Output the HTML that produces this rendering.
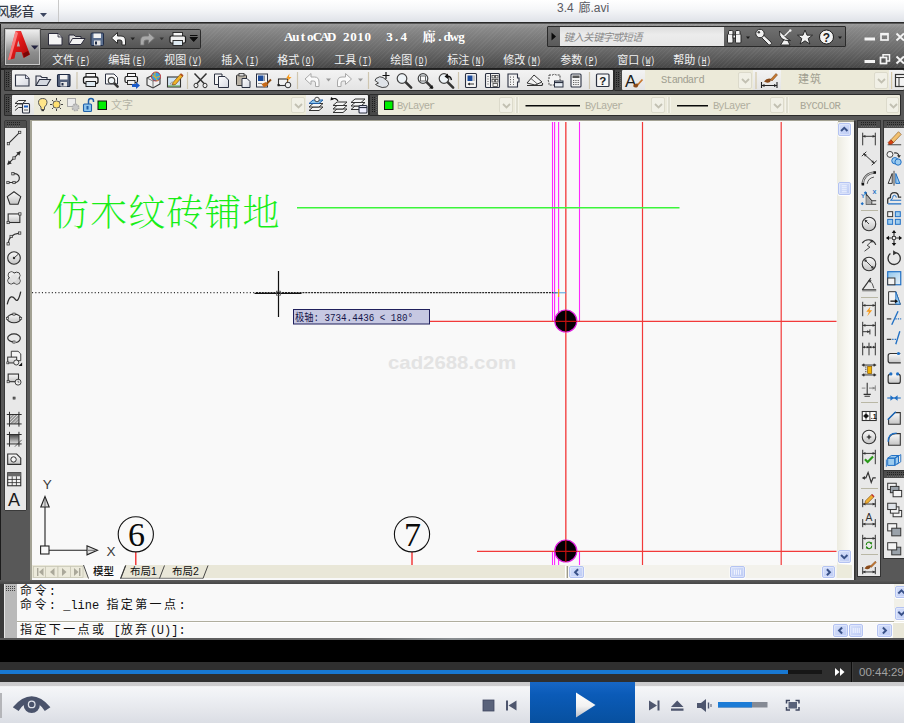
<!DOCTYPE html>
<html lang="zh-CN">
<head>
<meta charset="utf-8">
<title>3.4 廊.avi</title>
<style>
*{margin:0;padding:0;box-sizing:border-box}
html,body{width:904px;height:723px;overflow:hidden;background:#585858;font-family:"Liberation Sans","Noto Sans CJK SC",sans-serif}
.abs{position:absolute}
#root{position:relative;width:904px;height:723px;overflow:hidden;background:#585858}
/* player title */
#ptitle{left:0;top:0;width:904px;height:23px;background:linear-gradient(#ffffff 0,#f6f7f9 40%,#dfe2e8 100%);border-bottom:1px solid #2a2a2a}
#ptitle .sep{left:58px;top:0;width:1px;height:22px;background:#c9c9c9}
#ptitle .name{left:-3px;top:3.100px;font-size:13px;line-height:17px;color:#343946;white-space:pre;letter-spacing:-0.7px;font-weight:500}
#ptitle .file{left:557px;top:-.700px;font-size:12px;line-height:18px;color:#5a5a62;white-space:pre;word-spacing:1.500px}
/* autocad title */
#actitle{left:0;top:24px;width:904px;height:44px;background:repeating-linear-gradient(135deg,rgba(255,255,255,.045) 0 1px,rgba(0,0,0,0) 1px 3px),linear-gradient(#9a9a9a 0,#8a8a8a 10%,#7a7a7a 34%,#6a6a6a 58%,#575757 82%,#474747 100%)}
#acmenu{display:none}
.mi{top:54px;margin-left:.7px;font-size:11px;color:#f2f2f2;white-space:pre;line-height:13px}
.mi i{font-style:normal;display:inline-block;font-family:"Liberation Mono",monospace;font-size:10.500px;transform:scaleX(.74);transform-origin:0 50%;margin-left:2.300px}
#title{left:285px;top:31px;font:bold 12px/14px "Liberation Mono","Noto Sans Mono CJK SC",monospace;color:#fff;white-space:pre}
/* toolbars */
.tb{background:linear-gradient(#f3f3f3,#e4e4e4);border-radius:1px}
.beige{background:#ecead9}
.cmb{background:#ecead9;font:10.500px/14px "Liberation Mono","Noto Sans Mono CJK SC",monospace;color:#a09e90;white-space:pre;letter-spacing:-.95px}
.dd{background:#f1f0e6;border:1px solid #dcdacb;border-radius:2px}
.dd svg{position:absolute;left:2px;top:5px}
.sb{background:linear-gradient(135deg,#d6e0fb,#bdcbf4);border:1px solid #b4c3f2;border-radius:2px;box-shadow:0 0 0 .5px #eef2fd inset, 0 .5px 0 .5px #fff}
/* drawing */
#draw{left:32px;top:121px;width:806px;height:444px;background:#fafafa}
/* command */
.cmd{font:12px/14px "Liberation Mono","Noto Sans Mono CJK SC",monospace;color:#111;white-space:pre}
.cmd b{font-weight:normal;letter-spacing:2.4px}
</style>
</head>
<body>
<div id="root">

<!-- PLAYER TITLE -->
<div id="ptitle" class="abs">
  <div class="abs name">风影音</div>
  <svg class="abs" style="left:39.800px;top:12.600px" width="8" height="5"><path d="M0 0h7L3.500 4z" fill="#3c4660"/></svg>
  <div class="abs sep"></div>
  <div class="abs file">3.4 廊.avi</div>
</div>

<!-- AUTOCAD TITLE -->
<div id="actitle" class="abs"></div>
<div id="acmenu" class="abs"></div>
<svg class="abs" style="left:280px;top:27px" width="195" height="20" viewBox="280 27 195 20"><g font-family="Liberation Serif, Noto Serif CJK SC, serif" font-weight="bold" font-size="13" fill="#fff" text-anchor="middle"><text x="288.6 295.8 303.0 310.2 317.4 324.6 331.8" y="41.3">AutoCAD</text><text x="346.2 353.4 360.6 367.8" y="41.3">2010</text><text x="389.4 396.6 403.8" y="41.3">3.4</text><text x="429.0 439.8 447.0 454.2 461.4" y="41.3">廊.dwg</text></g></svg>

<!--MENU-->
<div class="abs mi" style="left:51.5px">文件<i>(<u>F</u>)</i></div>
<div class="abs mi" style="left:107.5px">编辑<i>(<u>E</u>)</i></div>
<div class="abs mi" style="left:163.5px">视图<i>(<u>V</u>)</i></div>
<div class="abs mi" style="left:220.5px">插入<i>(<u>I</u>)</i></div>
<div class="abs mi" style="left:276.5px">格式<i>(<u>O</u>)</i></div>
<div class="abs mi" style="left:333.5px">工具<i>(<u>T</u>)</i></div>
<div class="abs mi" style="left:389.5px">绘图<i>(<u>D</u>)</i></div>
<div class="abs mi" style="left:446.5px">标注<i>(<u>N</u>)</i></div>
<div class="abs mi" style="left:502.5px">修改<i>(<u>M</u>)</i></div>
<div class="abs mi" style="left:559.5px">参数<i>(<u>P</u>)</i></div>
<div class="abs mi" style="left:616.5px">窗口<i>(<u>W</u>)</i></div>
<div class="abs mi" style="left:672.5px">帮助<i>(<u>H</u>)</i></div>

<!--QAT-->
<div class="abs" style="left:0;top:68px;width:904px;height:1.500px;background:#1e1e1e"></div>
<div class="abs" style="left:41px;top:29px;width:160px;height:20px;background:linear-gradient(#787878,#626262 50%,#545454);border:1px solid #2b2b2b;border-left:none;border-radius:0 2px 2px 0"></div>
<div class="abs" style="left:5px;top:29px;width:35px;height:36px;background:linear-gradient(#ededed 0,#c9c9c9 30%,#8e8e8e 65%,#7a7a7a 100%);border:1px solid #c8c8c8;box-shadow:0 0 0 .8px #3a3a3a"></div>
<svg class="abs" style="left:5px;top:29px" width="35" height="36" viewBox="5 29 35 36">
  <defs><linearGradient id="ag" x1="0" y1="0" x2="1" y2="1"><stop offset="0" stop-color="#ff5a5a"/><stop offset=".45" stop-color="#e01818"/><stop offset="1" stop-color="#a00808"/></linearGradient></defs>
  <path d="M15.500 31H21L30 54.500L23.500 58L21.500 52H15.800L14.500 58.500L8 60ZM16.800 46.500H20L18.300 40.500Z" fill="url(#ag)"/>
  <path d="M15.500 31L8 60L10.500 59.500L18 33Z" fill="#ff9a9a" opacity=".75"/>
  <path d="M24 57.500L29.500 54.500L28 51L23 53.500Z" fill="#7a0505"/>
  <path d="M31 45.500H38.500L34.700 49.500Z" fill="#23233f"/>
</svg>
<svg class="abs" style="left:44px;top:30px" width="160" height="18" viewBox="44 30 160 18">
  <path d="M48.500 33.500H58L62 37V45H48.500Z" fill="#f4f4f4" stroke="#2a2a3a" stroke-width="1"/><path d="M58 33.500V37H62" fill="#ccc" stroke="#2a2a3a" stroke-width=".8"/>
  <path d="M69 44.500V35H74L75.500 36.500H81V38.500" fill="#ddd" stroke="#2a2a3a" stroke-width="1"/><path d="M69 44.500L72.500 38.500H85L81 44.500Z" fill="#f2f2f2" stroke="#2a2a3a" stroke-width="1"/>
  <rect x="91" y="33" width="12.500" height="12.500" rx="1" fill="#5a6e8e" stroke="#1e2a44" stroke-width="1"/><rect x="93.500" y="33.500" width="7.500" height="4.500" fill="#f2f2f2"/><rect x="94" y="40.500" width="6.500" height="5" fill="#e4e4e4"/><rect x="95" y="41.500" width="2" height="3" fill="#1e2a44"/>
  <path d="M111.500 38L117.500 32.500V36H121Q125.500 36 125.500 41V45H122V42Q122 40 120 40H117.500V43.500Z" fill="#f6f6f6" stroke="#2a2a2a" stroke-width="1"/>
  <path d="M130.500 37.500H135L132.700 40.200Z" fill="#222"/>
  <path d="M154.500 38L148.500 32.500V36H145Q140.500 36 140.500 41V45H144V42Q144 40 146 40H148.500V43.500Z" fill="#a9a9a9" stroke="#777" stroke-width=".8"/>
  <path d="M159.500 37.500H164L161.700 40.200Z" fill="#333"/>
  <rect x="173" y="32.500" width="9.500" height="4" fill="#f6f6f6" stroke="#222" stroke-width=".9"/><rect x="170" y="36" width="15.500" height="7" rx="1.500" fill="#f0f0f0" stroke="#1c1c1c" stroke-width="1.200"/><rect x="173" y="40.500" width="9.500" height="5" fill="#dfeaf2" stroke="#222" stroke-width=".9"/>
  <path d="M190 35.500H197.500M190 37.500H197.500L193.700 41.500Z" fill="#0c0c0c" stroke="#0c0c0c" stroke-width="1"/>
</svg>
<!-- search panel -->
<div class="abs" style="left:547px;top:26px;width:299px;height:21px;background:linear-gradient(#707070,#5a5a5a);border:1px solid #2a2a2a;border-radius:1px"></div>
<div class="abs" style="left:560px;top:27px;width:164px;height:19px;background:linear-gradient(#dcdcdc,#ececec 40%,#e6e6e6);"></div>
<svg class="abs" style="left:551px;top:32px" width="6" height="9"><path d="M.5 .5L5 4.500L.5 8.500Z" fill="#0a0a0a"/></svg>
<div class="abs" style="left:563.500px;top:31px;font-size:10.500px;line-height:13px;font-style:italic;color:#8a8a8a;white-space:pre;letter-spacing:-.7px">键入关键字或短语</div>
<svg class="abs" style="left:724px;top:27px" width="124" height="20" viewBox="724 27 124 20">
  <g fill="#f2f2f2" stroke="#1e1e1e" stroke-width=".9"><rect x="727.500" y="34" width="5.500" height="9" rx="1"/><rect x="735.500" y="34" width="5.500" height="9" rx="1"/><path d="M728.500 34V31.500Q728.500 30.500 730 30.500H731.500Q733 30.500 733 31.500V34M735.500 34V31.500Q735.500 30.500 737 30.500H738.500Q740 30.500 740 31.500V34"/><rect x="733" y="35" width="2.500" height="3"/></g>
  <path d="M746 36.500H750L748 39Z" fill="#1a1a1a"/>
  <g fill="#f2f2f2" stroke="#1e1e1e" stroke-width=".9"><path d="M761.500 37.500L768.500 44.500Q770 45.500 771 44.500Q772 43.500 771 42L764 35.500Z"/><circle cx="760" cy="33.500" r="4.200"/></g><circle cx="758.800" cy="32.300" r="1.300" fill="#444"/>
  <g fill="#f2f2f2" stroke="#1e1e1e" stroke-width=".9"><path d="M784 39.500L780.500 45H790L787.500 40Z"/><path d="M779.500 31Q778.500 41.500 790.500 40.500Q786.500 38.500 784 35.500Q781.500 33 779.500 31Z"/></g><path d="M784.500 36L790 30.500" stroke="#f2f2f2" stroke-width="1.300"/><circle cx="790.300" cy="30.500" r="1.200" fill="#f2f2f2"/>
  <path d="M805 30L807 35.200H812.500L808.200 38.500L809.800 44L805 40.800L800.200 44L801.800 38.500L797.500 35.200H803Z" fill="#f2f2f2" stroke="#1e1e1e" stroke-width=".9"/>
  <circle cx="826.500" cy="37" r="7" fill="#f2f2f2" stroke="#1e1e1e" stroke-width="1"/><text x="826.500" y="41.500" font-size="12" font-weight="bold" text-anchor="middle" fill="#222" font-family="Liberation Sans,sans-serif">?</text>
  <path d="M838 36.500H842L840 39Z" fill="#1a1a1a"/>
</svg>
<!-- window buttons -->
<svg class="abs" style="left:860px;top:30px" width="44" height="38" viewBox="860 30 44 38">
  <g fill="none" stroke="#f4f4f4" stroke-width="1.700">
    <path d="M864.500 39H875" stroke-width="3"/><rect x="881" y="33.700" width="7" height="6.300"/><path d="M881 34.200H888" stroke-width="2.400"/><path d="M896.500 33.500L904 40.500M904 33.500L896.500 40.500" stroke-width="2"/>
    <path d="M864.500 61.500H875" stroke-width="3"/><rect x="880.500" y="57.500" width="6" height="6"/><path d="M883 57V54.700H889.500V61H887" stroke-width="1.500"/><path d="M896.500 56.500L904 63.500M904 56.500L896.500 63.500" stroke-width="2"/>
  </g>
</svg>

<!--TOOLBAR1-->
<div class="abs" style="left:4px;top:69px;width:610px;height:22px;background:#474747;border:1px solid #2b2b2b;border-radius:1px"></div>
<div class="abs tb" style="left:12px;top:70px;width:601px;height:20px"></div>
<svg class="abs" style="left:6px;top:72px" width="5" height="16"><path d="M.5 0V16M2.500 0V16" stroke="#1c1c1c" stroke-dasharray="1 1"/><path d="M4.500 0V16" stroke="#666" stroke-dasharray="1 1"/></svg>
<div class="abs" style="left:614px;top:69px;width:290px;height:22px;background:#474747;border:1px solid #2b2b2b;border-radius:1px"></div>
<div class="abs tb" style="left:622px;top:70px;width:282px;height:20px"></div>
<svg class="abs" style="left:616px;top:72px" width="5" height="16"><path d="M.5 0V16M2.500 0V16" stroke="#1c1c1c" stroke-dasharray="1 1"/><path d="M4.500 0V16" stroke="#666" stroke-dasharray="1 1"/></svg>
<svg class="abs" style="left:12px;top:70px" width="892" height="20" viewBox="12 70 892 20" font-family="Liberation Sans,sans-serif">
  <!-- new -->
  <path d="M15.500 75H25.500L29 78.500V86H15.500Z" fill="url(#lg2)" stroke="#2a3040" stroke-width="1.100"/><path d="M25.500 75V78.500H29" fill="#dde" stroke="#2a3040" stroke-width=".8"/>
  <!-- open -->
  <path d="M36 85.500V76H40.500L42 77.500H47V79.500" fill="#e8e8ee" stroke="#2a3040" stroke-width="1.100"/><path d="M36 85.500L39.500 79.500H50.500L47 85.500Z" fill="#d4d8e0" stroke="#2a3040" stroke-width="1.100"/>
  <!-- save -->
  <rect x="57.500" y="74.500" width="12.500" height="12" rx="1" fill="#53607a" stroke="#1e2a44" stroke-width="1.100"/><rect x="60" y="75" width="7.500" height="4.500" fill="#f2f2f2"/><rect x="60.500" y="82" width="6.500" height="4.500" fill="#e4e4e4"/><rect x="61.500" y="83" width="2" height="2.500" fill="#1e2a44"/>
  <path d="M77 72V89" stroke="#cfc6b0" stroke-width="1.2"/>
  <!-- print -->
  <rect x="86" y="73.500" width="9.500" height="4" fill="#fafafa" stroke="#222" stroke-width="1"/><rect x="83.500" y="77" width="14.500" height="6.500" rx="2" fill="#f4f4f4" stroke="#1c1c1c" stroke-width="1.300"/><rect x="86" y="81.500" width="9.500" height="5" fill="#dfeaf2" stroke="#222" stroke-width="1"/>
  <!-- preview -->
  <path d="M105.500 74H114L117.500 77.500V84H105.500Z" fill="#fafafa" stroke="#2a3040" stroke-width="1"/><path d="M113.42 82.42L117.58 86.58" stroke="#333" stroke-width="2.6" stroke-linecap="round"/><circle cx="111.5" cy="80.5" r="3.2" fill="#eef4f8" stroke="#444" stroke-width="1.2"/>
  <!-- publish -->
  <rect x="127.500" y="73.500" width="8" height="3.500" fill="#fafafa" stroke="#222" stroke-width="1"/><rect x="125" y="76.500" width="12.500" height="6" rx="1.500" fill="#f4f4f4" stroke="#1c1c1c" stroke-width="1.200"/><rect x="127.500" y="80.500" width="7.500" height="4" fill="#eee" stroke="#222" stroke-width=".9"/><path d="M132 84H136V82L140 85.500L136 89V87H132Z" fill="#1a5ac8"/>
  <!-- 3d dwf -->
  <path d="M147 78L153 75L160 78V84L153 88L147 85Z" fill="#eee" stroke="#333" stroke-width="1.100"/><path d="M147 78L153 81L160 78M153 81V88" fill="none" stroke="#555" stroke-width=".8"/><circle cx="156" cy="76.500" r="4.500" fill="#35a0e0" stroke="#c02020" stroke-width=".9"/><path d="M152 75Q156 79 160 76M155 72Q153.500 77 157.500 81" fill="none" stroke="#e8b020" stroke-width="1"/>
  <!-- edit image -->
  <rect x="167.500" y="77" width="13" height="10" fill="#cfe4f4" stroke="#333" stroke-width="1.100"/><path d="M168 85.500H180V86.500H168Z" fill="#5aa040"/><path d="M170 84Q172 80 175 84Z" fill="#f4f4f4" stroke="#777" stroke-width=".6"/><path d="M173 82.500L180.500 74L183 76L175.500 84.500L172.500 85Z" fill="#f0b428" stroke="#7a4a10" stroke-width=".7"/><path d="M180.500 74L183 76" stroke="#b05020" stroke-width="1.800"/>
  <path d="M187.5 72V89" stroke="#cfc6b0" stroke-width="1.2"/>
  <!-- cut -->
  <path d="M194.500 73.500L204.500 84M206.500 73.500L196.500 84" stroke="#333" stroke-width="1.500"/><ellipse cx="196" cy="85.500" rx="2" ry="2.300" fill="#eee" stroke="#333" stroke-width="1"/><ellipse cx="205" cy="85.500" rx="2" ry="2.300" fill="#eee" stroke="#333" stroke-width="1"/>
  <!-- copy -->
  <path d="M214.500 74H222V84.500H214.500Z" fill="#f4f4f4" stroke="#2a3040" stroke-width="1"/><path d="M218.500 76.500H225L228.500 80V87.500H218.500Z" fill="url(#lg2)" stroke="#2a3040" stroke-width="1"/>
  <!-- paste -->
  <rect x="236.500" y="75" width="10" height="10.500" rx="1" fill="#b9b2a6" stroke="#333" stroke-width="1"/><rect x="239" y="73.500" width="5" height="2.500" fill="#ddd" stroke="#333" stroke-width=".8"/><path d="M242 78.500H247L250 81.500V87.500H242Z" fill="url(#lg2)" stroke="#2a3040" stroke-width="1"/>
  <!-- matchprop -->
  <rect x="256.500" y="74" width="11" height="13" fill="#f4f4f4" stroke="#2a3040" stroke-width="1"/><rect x="258" y="75.500" width="5.500" height="5.500" fill="#1a4a9a"/><path d="M264.500 75.500V81M258 83.500H262" stroke="#777" stroke-width=".8"/><path d="M261.500 84L266 82L268.500 85L264 87.500Z" fill="#c86a18"/><path d="M267 83.500L271 79.500" stroke="#8a4a10" stroke-width="1.800"/>
  <!-- block editor -->
  <rect x="278.500" y="79" width="9" height="6.500" fill="#f2f2f2" stroke="#333" stroke-width="1.100"/><circle cx="288" cy="85" r="2.800" fill="#eee" stroke="#333" stroke-width="1"/><rect x="277.500" y="84" width="2.200" height="2.200" fill="#222"/><path d="M289.500 73.500L286 78.500H288.500L286.500 82.500L291.500 77H289Z" fill="#f79a1a"/>
  <path d="M297.5 72V89" stroke="#cfc6b0" stroke-width="1.2"/>
  <!-- undo/redo -->
  <path d="M305 79L311 73.500V77H314.500Q319 77 319 82V86.500H315.500V83Q315.500 81 313.500 81H311V84.500Z" fill="#fafafa" stroke="#a8a8a8" stroke-width="1"/>
  <path d="M326 78.500H331L328.500 81.500Z" fill="#9a9a9a"/>
  <path d="M351.500 79L345.500 73.500V77H342Q337.500 77 337.500 82V86.500H341V83Q341 81 343 81H345.500V84.500Z" fill="#fafafa" stroke="#a8a8a8" stroke-width="1"/>
  <path d="M358 78.500H363L360.500 81.500Z" fill="#9a9a9a"/>
  <path d="M368.5 72V89" stroke="#cfc6b0" stroke-width="1.2"/>
  <!-- pan -->
  <path d="M376 78.500Q380 75.500 383 77.500L388 81.500Q390 84.500 386.500 87Q382 88.500 378 86L375.500 84.500L378.500 83L375 80.500Z" fill="#dfe3e8" stroke="#444" stroke-width="1"/><path d="M386 72V79M382.500 75.500H389.500" stroke="#111" stroke-width="1.200"/>
  <!-- zooms -->
  <path d="M404.88 81.38L411.12 87.62" stroke="#333" stroke-width="2.6" stroke-linecap="round"/><circle cx="402" cy="78.5" r="4.8" fill="#eef4f8" stroke="#444" stroke-width="1.2"/>
  <path d="M425.88 81.38L432.12 87.62" stroke="#333" stroke-width="2.6" stroke-linecap="round"/><circle cx="423" cy="78.5" r="4.8" fill="#eef4f8" stroke="#444" stroke-width="1.2"/><rect x="420.500" y="76" width="5" height="5" fill="#f8f8f8" stroke="#555" stroke-width=".9"/><path d="M432.500 88.500h-3.500l3.500 -3.500z" fill="#111"/>
  <path d="M446.88 81.38L453.12 87.62" stroke="#333" stroke-width="2.6" stroke-linecap="round"/><circle cx="444" cy="78.5" r="4.8" fill="#eef4f8" stroke="#444" stroke-width="1.2"/><path d="M446 76.500Q450.500 75 451.500 80" fill="none" stroke="#111" stroke-width="1.400"/><path d="M444.500 76.500L448 73.500V79Z" fill="#111"/>
  <path d="M458.5 72V89" stroke="#cfc6b0" stroke-width="1.2"/>
  <!-- properties -->
  <rect x="465.500" y="73.500" width="11" height="14" rx="1" fill="#f4f4f4" stroke="#2a3040" stroke-width="1.100"/><rect x="467.500" y="75.500" width="5" height="5.500" fill="#1a4a9a"/><path d="M474 75.500V81" stroke="#888" stroke-width=".9"/><path d="M468 84H474" stroke="#333" stroke-width="1"/><path d="M467.500 84l2.500 -1.500v3z" fill="#333"/>
  <!-- design center -->
  <rect x="485.500" y="73.500" width="14" height="14" rx="1" fill="#f2f2f2" stroke="#2a3040" stroke-width="1.100"/><path d="M490.500 74V87.500" stroke="#2a3040" stroke-width="1"/><path d="M488 76V86" stroke="#555" stroke-width="1" stroke-dasharray="1 1.500"/><g fill="none" stroke="#444" stroke-width=".8"><rect x="492" y="75.500" width="2.500" height="2.500"/><rect x="495.500" y="75.500" width="2.500" height="2.500"/><rect x="492" y="79.500" width="2.500" height="2.500"/><rect x="495.500" y="79.500" width="2.500" height="2.500"/><rect x="493" y="83.500" width="4.500" height="3"/></g>
  <!-- tool palettes -->
  <path d="M508 74H517.500V78H519V82H517.500V87H508Z" fill="#f2f2f2" stroke="#2a3040" stroke-width="1.100"/><path d="M510.500 76.500V85M513.500 76.500V85" stroke="#666" stroke-width="1" stroke-dasharray="1.200 1.300"/>
  <!-- sheet set -->
  <path d="M527 83L534 75L542 82L535 85Z" fill="#f4f4f4" stroke="#333" stroke-width="1"/><path d="M531 78.500L538 84.500" stroke="#555" stroke-width=".9"/><path d="M527 85.500H541Q543 85.500 542.500 83" fill="none" stroke="#333" stroke-width="1.100"/>
  <!-- markup -->
  <path d="M549 75H553Q554 73.500 556 75H560V80Q561.500 81 560 82.500V85H549V82Q547.500 80.500 549 79Z" fill="#f4f4f4" stroke="#444" stroke-width="1" stroke-dasharray="2 1"/><rect x="554.500" y="81" width="8.500" height="6" fill="#e8eef4" stroke="#2a3040" stroke-width="1"/><path d="M554.500 82.500H563" stroke="#2a3040" stroke-width="1.200"/>
  <!-- calc -->
  <rect x="571" y="74" width="10" height="13" rx="1" fill="#f2f2f2" stroke="#2a3040" stroke-width="1.100"/><rect x="572.500" y="75.500" width="7" height="2.500" fill="#555"/><path d="M573 80.500H579.500M573 82.500H579.500M573 84.500H579.500" stroke="#666" stroke-width="1" stroke-dasharray="1.300 1"/>
  <path d="M589.5 72V89" stroke="#cfc6b0" stroke-width="1.2"/>
  <!-- help -->
  <rect x="596.500" y="74" width="12.500" height="12.500" rx="1" fill="#f6f6f6" stroke="#2a3040" stroke-width="1.200"/><text x="602.800" y="84.500" font-size="11.500" font-weight="bold" text-anchor="middle" fill="#222">?</text>
  <!-- text style -->
  <text x="625" y="86.500" font-size="17" fill="#1a1a1a">A</text><path d="M633 86Q635.500 82.500 639 84L637.500 87Q635 88.500 633 86Z" fill="#8a4a1a"/><path d="M638 84.500L642.500 79.500" stroke="#c87830" stroke-width="1.800"/>
  <!-- dim style -->
  <path d="M761.500 82V88M777 82V88M761.500 85.500H777" stroke="#222" stroke-width="1.100"/><path d="M761.500 85.500l3 -1.500v3zM777 85.500l-3 -1.500v3z" fill="#222"/><path d="M764 81.500Q767 77.500 771.500 79L770 82Q767 83.500 764 81.500Z" fill="#8a4a1a"/><path d="M770.500 79.500L776 73.500L777.500 75L772 81Z" fill="#c87830" stroke="#6a3a10" stroke-width=".5"/>
  <!-- next icon (cut) -->
  <rect x="895.500" y="74.500" width="10" height="12" fill="#f4f4f4" stroke="#333" stroke-width="1.200"/><path d="M895.500 77.500H905M899 77.500V86" stroke="#333" stroke-width="1"/>
  <path d="M756 72V89" stroke="#d4c8a8" stroke-width="1.200"/>
  <path d="M891.600 72V89" stroke="#d4c8a8" stroke-width="1.200"/>
</svg>
<svg class="abs" width="0" height="0"><defs><linearGradient id="lg2" x1="0" y1="0" x2="1" y2="1"><stop offset="0" stop-color="#ffffff"/><stop offset="1" stop-color="#d4d7e0"/></linearGradient></defs></svg>
<div class="abs cmb" style="left:645px;top:70px;width:108px;height:20px;padding:3px 0 0 16px">Standard</div>
<div class="abs dd" style="left:738px;top:72px;width:14px;height:16.500px"><svg width="9" height="6"><path d="M1 1L4.500 4.500L8 1" fill="none" stroke="#c2c0b2" stroke-width="1.800"/></svg></div>
<div class="abs cmb" style="left:781px;top:70px;width:107.500px;height:20px;padding:3px 0 0 17px;font-size:11px;letter-spacing:1px">建筑</div>
<div class="abs dd" style="left:874px;top:72px;width:13.500px;height:16.500px"><svg width="9" height="6"><path d="M1 1L4.500 4.500L8 1" fill="none" stroke="#c2c0b2" stroke-width="1.800"/></svg></div>

<!--TOOLBAR2-->
<div class="abs" style="left:4px;top:94px;width:365px;height:22px;background:#474747;border:1px solid #2b2b2b;border-radius:1px"></div>
<div class="abs tb" style="left:12px;top:95px;width:356px;height:20px"></div>
<svg class="abs" style="left:6px;top:97px" width="5" height="16"><path d="M.5 0V16M2.500 0V16" stroke="#1c1c1c" stroke-dasharray="1 1"/><path d="M4.500 0V16" stroke="#666" stroke-dasharray="1 1"/></svg>
<div class="abs" style="left:369px;top:94px;width:532px;height:22px;background:#474747;border:1px solid #2b2b2b;border-radius:1px"></div>
<div class="abs tb" style="left:378px;top:95px;width:522px;height:20px;background:#eceadb"></div>
<svg class="abs" style="left:372px;top:97px" width="5" height="16"><path d="M.5 0V16M2.500 0V16" stroke="#1c1c1c" stroke-dasharray="1 1"/><path d="M4.500 0V16" stroke="#666" stroke-dasharray="1 1"/></svg>
<div class="abs beige" style="left:34px;top:95px;width:272px;height:20px"></div>
<div class="abs cmb" style="left:111px;top:99px;font-size:11px;letter-spacing:0;color:#b4b3a6">文字</div>
<div class="abs dd" style="left:291px;top:97px;width:14px;height:16px"><svg width="9" height="6"><path d="M1 1L4.500 4.500L8 1" fill="none" stroke="#c2c0b2" stroke-width="1.800"/></svg></div>
<div class="abs cmb" style="left:397px;top:99px;color:#b0ae9f">ByLayer</div>
<div class="abs dd" style="left:499px;top:97px;width:14px;height:16px"><svg width="9" height="6"><path d="M1 1L4.500 4.500L8 1" fill="none" stroke="#c2c0b2" stroke-width="1.800"/></svg></div>
<div class="abs cmb" style="left:585px;top:99px;color:#b0ae9f">ByLayer</div>
<div class="abs dd" style="left:651px;top:97px;width:14px;height:16px"><svg width="9" height="6"><path d="M1 1L4.500 4.500L8 1" fill="none" stroke="#c2c0b2" stroke-width="1.800"/></svg></div>
<div class="abs cmb" style="left:713px;top:99px;color:#b0ae9f">ByLayer</div>
<div class="abs dd" style="left:770px;top:97px;width:14px;height:16px"><svg width="9" height="6"><path d="M1 1L4.500 4.500L8 1" fill="none" stroke="#c2c0b2" stroke-width="1.800"/></svg></div>
<div class="abs cmb" style="left:800px;top:99px;color:#a8a697;font-size:10.500px;letter-spacing:-.55px">BYCOLOR</div>
<div class="abs dd" style="left:885.500px;top:97px;width:13.500px;height:16px"><svg width="9" height="6"><path d="M1 1L4.500 4.500L8 1" fill="none" stroke="#c2c0b2" stroke-width="1.800"/></svg></div>
<svg class="abs" style="left:12px;top:95px" width="892" height="20" viewBox="12 95 892 20">
  <!-- layer props -->
  <path d="M15 103.500L18.500 100.500H26L22.500 103.500ZM15 107L18.500 104H26M15 110.500L18.500 107.500H22" fill="#f4f4f4" stroke="#333" stroke-width="1"/><rect x="22.500" y="103.500" width="7" height="9.500" rx="1" fill="#f4f4f4" stroke="#2a3040" stroke-width="1.100"/><rect x="24" y="105.500" width="4" height="2" fill="#2060c0"/><path d="M24 110H28" stroke="#555" stroke-width="1"/>
  <!-- bulb -->
  <path d="M42.700 98.500Q47 98.500 47 102.500Q47 105 44.500 107V109.500H41V107Q38.500 105 38.500 102.500Q38.500 98.500 42.700 98.500Z" fill="#ffe58a" stroke="#555" stroke-width="1"/><path d="M41.500 110.500H44" stroke="#333" stroke-width="1.300"/>
  <!-- sun -->
  <circle cx="56.500" cy="104.500" r="3.600" fill="#ffe070" stroke="#555" stroke-width=".9"/><path d="M56.500 98V100M56.500 109V111M50 104.500H52M61 104.500H63M52 100L53.500 101.500M59.500 107.500L61 109M52 109L53.500 107.500M59.500 101.500L61 100" stroke="#444" stroke-width="1"/>
  <!-- vp freeze gray -->
  <rect x="67.500" y="98.500" width="8" height="8" fill="#ececec" stroke="#aaa" stroke-width="1"/><circle cx="75.500" cy="107.500" r="3.200" fill="#c8c8c8" stroke="#aaa" stroke-width="1.600" stroke-dasharray="1.500 1"/>
  <!-- lock -->
  <rect x="83.500" y="104" width="8" height="7.500" rx="1" fill="#8cc4ec" stroke="#1f5fa8" stroke-width="1.100"/><path d="M88.500 104V101Q88.500 98.500 91 98.500Q93.500 98.500 93.500 101V102" fill="none" stroke="#1f5fa8" stroke-width="1.500"/><rect x="86.500" y="106" width="2" height="3.500" fill="#1f5fa8"/>
  <!-- green squares -->
  <rect x="98" y="101" width="8.500" height="8.500" fill="#00ee00" stroke="#111" stroke-width="1"/>
  <rect x="384.500" y="101" width="8.500" height="8.500" fill="#00ee00" stroke="#111" stroke-width="1"/>
  <!-- layer icons -->
  <path d="M309 110.5L313 107.0H323L319 110.5Z" fill="#f4f4f4" stroke="#333" stroke-width="1"/><path d="M309 107.0L313 103.5H323L319 107.0Z" fill="#f4f4f4" stroke="#333" stroke-width="1"/><path d="M309 103.5L313 100.0H323L319 103.5Z" fill="#8cc4ec" stroke="#1f5fa8" stroke-width="1"/><circle cx="317" cy="99.500" r="2.300" fill="#f4f4f4" stroke="#444" stroke-width="1"/>
  <path d="M333 112.5L337 109.0H347L343 112.5Z" fill="#f4f4f4" stroke="#333" stroke-width="1"/><path d="M333 109.0L337 105.5H347L343 109.0Z" fill="#f4f4f4" stroke="#333" stroke-width="1"/><path d="M333 105.5L337 102.0H347L343 105.5Z" fill="#f4f4f4" stroke="#333" stroke-width="1"/><path d="M331.500 99.500Q336 97 338 101" fill="none" stroke="#111" stroke-width="1.100"/><path d="M330.500 100.500L331 97L334 99Z" fill="#111"/>
  <path d="M351 109.5L355 106.0H365L361 109.5Z" fill="#f4f4f4" stroke="#333" stroke-width="1"/><path d="M351 106.0L355 102.5H365L361 106.0Z" fill="#f4f4f4" stroke="#333" stroke-width="1"/><path d="M351 102.5L355 99.0H365L361 102.5Z" fill="#f4f4f4" stroke="#333" stroke-width="1"/><rect x="359" y="105.500" width="8" height="7.500" rx="1" fill="#eef" stroke="#2a3040" stroke-width="1.100"/><path d="M359 107.500H367" stroke="#2a3040" stroke-width="1.200"/>
  <!-- separators -->
  <path d="M516 97V113M518 97V113M668 97V113M670 97V113M786 97V113M788 97V113" stroke="#fbfbf6" stroke-width="1"/><path d="M517 97V113M669 97V113M787 97V113" stroke="#c9c7b6" stroke-width="1"/>
  <!-- line samples -->
  <path d="M525.500 105.800H580M677 105.800H708" stroke="#0a0a0a" stroke-width="1.400"/>
</svg>

<!--LEFTBAR-->
<div class="abs" style="left:0;top:24px;width:1px;height:616px;background:#1c1c1c"></div>
<div class="abs" style="left:4px;top:120px;width:23px;height:391px;background:#e8e8e8;border:1px solid #3a3a3a;border-radius:1px"></div>
<div class="abs" style="left:5px;top:121px;width:21px;height:7px;background:#4d4d4d"></div>
<svg class="abs" style="left:7px;top:122px" width="16" height="5"><path d="M0 .5H13M0 2.500H13" stroke="#222" stroke-dasharray="1 1"/><path d="M0 4.500H13" stroke="#6a6a6a" stroke-dasharray="1 1"/></svg>
<svg class="abs" style="left:0;top:0" width="0" height="0"><defs><linearGradient id="lg" x1="0" y1="0" x2="0" y2="1"><stop offset="0" stop-color="#fafafa"/><stop offset="1" stop-color="#c4c4c4"/></linearGradient><linearGradient id="bg" x1="0" y1="0" x2="1" y2="1"><stop offset="0" stop-color="#8cc4ec"/><stop offset="1" stop-color="#e8f2fa"/></linearGradient><linearGradient id="dg" x1="0" y1="0" x2="0" y2="1"><stop offset="0" stop-color="#444"/><stop offset="1" stop-color="#e4e4e4"/></linearGradient></defs></svg>
<svg class="abs" style="left:5px;top:129.0px" width="18" height="18" viewBox="0 0 20 20"><path d="M4 16L16 4" stroke="#2e2e2e" stroke-width="1.2"/><rect x="2.500" y="15" width="2.600" height="2.600" fill="#ddd" stroke="#2e2e2e" stroke-width=".8"/><rect x="15" y="2.500" width="2.600" height="2.600" fill="#ddd" stroke="#2e2e2e" stroke-width=".8"/></svg>
<svg class="abs" style="left:5px;top:149.0px" width="18" height="18" viewBox="0 0 20 20"><path d="M3 17L17 3" stroke="#2e2e2e" stroke-width="1.200"/><path d="M17.500 2.500L12.500 4L16 7.500ZM2.500 17.500L7.500 16L4 12.500Z" fill="#2e2e2e"/><rect x="8.700" y="8.700" width="2.600" height="2.600" fill="#ddd" stroke="#2e2e2e" stroke-width=".8"/></svg>
<svg class="abs" style="left:5px;top:169.0px" width="18" height="18" viewBox="0 0 20 20"><path d="M3 15H10M10 15A5 5 0 1 0 9 5.500" fill="none" stroke="#2e2e2e" stroke-width="1.300"/><rect x="2" y="13.700" width="2.600" height="2.600" fill="#ddd" stroke="#2e2e2e" stroke-width=".8"/><rect x="8.700" y="13.700" width="2.600" height="2.600" fill="#ddd" stroke="#2e2e2e" stroke-width=".8"/><rect x="7.500" y="4" width="2.600" height="2.600" fill="#ddd" stroke="#2e2e2e" stroke-width=".8"/></svg>
<svg class="abs" style="left:5px;top:189.0px" width="18" height="18" viewBox="0 0 20 20"><path d="M10 3L17.500 8.500L14.500 17H5.500L2.500 8.500Z" fill="url(#lg)" stroke="#2e2e2e" stroke-width="1.200"/></svg>
<svg class="abs" style="left:5px;top:209.0px" width="18" height="18" viewBox="0 0 20 20"><rect x="3.500" y="5.500" width="13" height="9.500" fill="url(#lg)" stroke="#2e2e2e" stroke-width="1.200"/><rect x="2.200" y="13.700" width="2.600" height="2.600" fill="#ddd" stroke="#2e2e2e" stroke-width=".8"/><rect x="15.200" y="4.200" width="2.600" height="2.600" fill="#ddd" stroke="#2e2e2e" stroke-width=".8"/></svg>
<svg class="abs" style="left:5px;top:229.0px" width="18" height="18" viewBox="0 0 20 20"><path d="M3.500 16.500Q4 6 16 4.500" fill="none" stroke="#2e2e2e" stroke-width="1.300"/><rect x="2.200" y="15.200" width="2.600" height="2.600" fill="#ddd" stroke="#2e2e2e" stroke-width=".8"/><rect x="5.500" y="7" width="2.600" height="2.600" fill="#ddd" stroke="#2e2e2e" stroke-width=".8"/><rect x="15" y="3.200" width="2.600" height="2.600" fill="#ddd" stroke="#2e2e2e" stroke-width=".8"/></svg>
<svg class="abs" style="left:5px;top:249.0px" width="18" height="18" viewBox="0 0 20 20"><circle cx="10" cy="10" r="7" fill="url(#lg)" stroke="#2e2e2e" stroke-width="1.200"/><path d="M10 10L14.500 6" stroke="#2e2e2e" stroke-width="1"/><circle cx="10" cy="10" r="1.300" fill="#2e2e2e"/></svg>
<svg class="abs" style="left:5px;top:269.0px" width="18" height="18" viewBox="0 0 20 20"><g fill="#e6e6e6" stroke="#2e2e2e" stroke-width="1.100"><circle cx="7.200" cy="6.800" r="3.700"/><circle cx="13" cy="7.200" r="3.700"/><circle cx="6.800" cy="13" r="3.700"/><circle cx="13.200" cy="13.200" r="3.700"/></g><path d="M5.500 5.500H14.500V14.500H5.500Z" fill="#e6e6e6"/><circle cx="7.200" cy="6.800" r="3.100" fill="#ededed"/><circle cx="13" cy="7.200" r="3.100" fill="#e8e8e8"/><circle cx="6.800" cy="13" r="3.100" fill="#dedede"/><circle cx="13.200" cy="13.200" r="3.100" fill="#d6d6d6"/><circle cx="10" cy="10" r="3.500" fill="#e2e2e2"/></svg>
<svg class="abs" style="left:5px;top:289.0px" width="18" height="18" viewBox="0 0 20 20"><path d="M2.500 17C5 6 9 8 11 11S15 14 17.500 3" fill="none" stroke="#2e2e2e" stroke-width="1.400"/></svg>
<svg class="abs" style="left:5px;top:309.0px" width="18" height="18" viewBox="0 0 20 20"><ellipse cx="10" cy="10.500" rx="7.500" ry="4.800" fill="url(#lg)" stroke="#2e2e2e" stroke-width="1.200"/><rect x="1.500" y="9.200" width="2.400" height="2.400" fill="#ddd" stroke="#2e2e2e" stroke-width=".7"/><rect x="16.200" y="9.200" width="2.400" height="2.400" fill="#ddd" stroke="#2e2e2e" stroke-width=".7"/><rect x="8.800" y="4.500" width="2.400" height="2.400" fill="#ddd" stroke="#2e2e2e" stroke-width=".7"/></svg>
<svg class="abs" style="left:5px;top:329.0px" width="18" height="18" viewBox="0 0 20 20"><path d="M10 14.500A7 4.500 0 1 1 17 10Q17 14 12 15" fill="none" stroke="#2e2e2e" stroke-width="1.300"/><rect x="8.800" y="13.300" width="2.400" height="2.400" fill="#ddd" stroke="#2e2e2e" stroke-width=".7"/></svg>
<svg class="abs" style="left:5px;top:349.0px" width="18" height="18" viewBox="0 0 20 20"><path d="M7 2.500H14.500L17.500 5.500V13H7Z" fill="#f4f4f4" stroke="#2e2e2e" stroke-width="1"/><rect x="3" y="9" width="10" height="6.500" fill="url(#lg)" stroke="#2e2e2e" stroke-width="1.100"/><circle cx="12.500" cy="15" r="2.800" fill="#eee" stroke="#2e2e2e" stroke-width="1"/><rect x="2" y="14.300" width="2.200" height="2.200" fill="#ddd" stroke="#2e2e2e" stroke-width=".7"/><path d="M19 19h-4l4-4z" fill="#111"/></svg>
<svg class="abs" style="left:5px;top:370.0px" width="18" height="18" viewBox="0 0 20 20"><rect x="3.500" y="4.500" width="11.500" height="8.500" fill="url(#lg)" stroke="#2e2e2e" stroke-width="1.200"/><circle cx="14.500" cy="13.500" r="3.300" fill="#eee" stroke="#2e2e2e" stroke-width="1"/><rect x="2.300" y="11.800" width="2.400" height="2.400" fill="#ddd" stroke="#2e2e2e" stroke-width=".7"/><path d="M14.500 11.800V13.500H16" fill="none" stroke="#2e2e2e" stroke-width=".7"/></svg>
<svg class="abs" style="left:5px;top:389.0px" width="18" height="18" viewBox="0 0 20 20"><rect x="9" y="9" width="2.200" height="2.200" fill="#888" stroke="#2e2e2e" stroke-width=".8"/></svg>
<svg class="abs" style="left:5px;top:409.5px" width="18" height="18" viewBox="0 0 20 20"><rect x="5" y="5" width="10.500" height="10.500" fill="#999"/><path d="M5 8L8 5M5 11.500L11.500 5M5 15L15 5M8.500 15.500L15.500 8.500M12 15.500L15.500 12" stroke="#e8e8e8" stroke-width=".9"/><path d="M5 2V18.500M15.500 2V18.500M2 5H18.500M2 15.500H18.500" stroke="#2e2e2e" stroke-width="1.100"/></svg>
<svg class="abs" style="left:5px;top:429.5px" width="18" height="18" viewBox="0 0 20 20"><rect x="5" y="5" width="10.500" height="10.500" fill="url(#dg)"/><path d="M5 2V18.500M15.500 2V18.500M2 5H18.500M2 15.500H18.500" stroke="#2e2e2e" stroke-width="1.100"/><path d="M11 18.500L18.500 11" stroke="#2e2e2e" stroke-width=".8"/></svg>
<svg class="abs" style="left:5px;top:450.0px" width="18" height="18" viewBox="0 0 20 20"><path d="M3 4.500H13L17.500 9V16H3Z" fill="url(#lg)" stroke="#2e2e2e" stroke-width="1.200"/><circle cx="9.500" cy="10.500" r="3" fill="#f4f4f4" stroke="#2e2e2e" stroke-width="1.100"/></svg>
<svg class="abs" style="left:5px;top:470.0px" width="18" height="18" viewBox="0 0 20 20"><rect x="3" y="3" width="14.500" height="14.500" fill="#f2f2f2" stroke="#2e2e2e" stroke-width="1.200"/><rect x="3" y="3" width="14.500" height="4" fill="#6a6a6a"/><path d="M3 10.500H17.500M3 14H17.500M8 7V17.500M12.700 7V17.500" stroke="#2e2e2e" stroke-width=".9"/></svg>
<svg class="abs" style="left:5px;top:490.0px" width="18" height="18" viewBox="0 0 20 20"><text x="10" y="17.500" font-size="20" font-family="Liberation Sans,sans-serif" text-anchor="middle" fill="#1c1c1c">A</text></svg>

<!--RIGHTBARS-->
<div class="abs" style="left:854px;top:116px;width:50px;height:468px;background:#585858"></div>
<div class="abs" style="left:854px;top:121px;width:2px;height:459px;background:linear-gradient(90deg,#2e2e2e,#4a4a4a)"></div>
<div class="abs" style="left:857px;top:120px;width:24px;height:457px;background:#e8e8e8;border:1px solid #333"></div>
<div class="abs" style="left:858px;top:121px;width:22px;height:7px;background:#4d4d4d"></div>
<svg class="abs" style="left:861px;top:122px" width="16" height="5"><path d="M0 .5H15M0 2.500H15" stroke="#222" stroke-dasharray="1 1"/><path d="M0 4.500H15" stroke="#6a6a6a" stroke-dasharray="1 1"/></svg>
<div class="abs" style="left:883px;top:120px;width:24px;height:351px;background:#e8e8e8;border:1px solid #333"></div>
<div class="abs" style="left:884px;top:121px;width:22px;height:7px;background:#4d4d4d"></div>
<svg class="abs" style="left:887px;top:122px" width="17" height="5"><path d="M0 .5H17M0 2.500H17" stroke="#222" stroke-dasharray="1 1"/><path d="M0 4.500H17" stroke="#6a6a6a" stroke-dasharray="1 1"/></svg>
<div class="abs" style="left:883px;top:470px;width:24px;height:89px;background:#e8e8e8;border:1px solid #333"></div>
<div class="abs" style="left:884px;top:471px;width:22px;height:7px;background:#4d4d4d"></div>
<svg class="abs" style="left:887px;top:472px" width="17" height="5"><path d="M0 .5H17M0 2.500H17" stroke="#222" stroke-dasharray="1 1"/><path d="M0 4.500H17" stroke="#6a6a6a" stroke-dasharray="1 1"/></svg>
<svg class="abs" style="left:859.5px;top:129.5px" width="18" height="18" viewBox="0 0 20 20"><path d="M3 3V17M17 3V17M3 7H17" stroke="#333" stroke-width="1.1" fill="none"/><path d="M3 7l3 -1.500v3zM17 7l-3 -1.500v3z" fill="#333"/></svg>
<svg class="abs" style="left:859.5px;top:149px" width="18" height="18" viewBox="0 0 20 20"><path d="M4 5L16 16M2 8L7 3M13 18L18.500 13" stroke="#333" stroke-width="1.100"/><path d="M4 5l3.500 1.500l-2 2zM16 16l-3.500 -1.500l2 -2z" fill="#333"/></svg>
<svg class="abs" style="left:859.5px;top:169.3px" width="18" height="18" viewBox="0 0 20 20"><path d="M3 17A13 13 0 0 1 16 4" fill="none" stroke="#555" stroke-width="2.600"/><path d="M3 17A13 13 0 0 1 16 4" fill="none" stroke="#ddd" stroke-width="1"/><path d="M8 16.500Q9 10 15.500 9" fill="none" stroke="#333" stroke-width=".9"/><rect x="1.800" y="15.500" width="2.800" height="2.800" fill="#111"/><rect x="15" y="2.500" width="2.800" height="2.800" fill="#111"/></svg>
<svg class="abs" style="left:859.5px;top:189px" width="18" height="18" viewBox="0 0 20 20"><path d="M7 4V17H18M7 6L13 13V17M13 13H18" fill="none" stroke="#333" stroke-width="1.200"/><path d="M7 7L12.500 13.500V17H7Z" fill="#aaa"/><text x="1" y="10" font-size="6.500" font-weight="bold" fill="#1f6fc4" font-family="Liberation Sans,sans-serif">Y</text><text x="14" y="6" font-size="6.500" font-weight="bold" fill="#1f6fc4" font-family="Liberation Sans,sans-serif">X</text><path d="M6 2.500l1.800 1.800l-1.800 1.800l-1.800 -1.800zM2.500 14.500l1.800 1.800l-1.800 1.800l-1.800 -1.800z" fill="#1f6fc4"/></svg>
<div class="abs" style="left:860.5px;top:210.0px;width:17px;height:1px;background:#b9b7a5"></div>
<svg class="abs" style="left:859.5px;top:215px" width="18" height="18" viewBox="0 0 20 20"><circle cx="10" cy="10" r="7.500" fill="url(#lg)" stroke="#333" stroke-width="1.200"/><path d="M10 10L5.500 5.500" stroke="#333" stroke-width="1"/><path d="M5 5l3.500 1l-2.500 2.500z" fill="#333"/></svg>
<svg class="abs" style="left:859.5px;top:235px" width="18" height="18" viewBox="0 0 20 20"><path d="M2.500 9A8.500 8.500 0 0 1 17.500 11" fill="none" stroke="#333" stroke-width="1.300"/><path d="M5 18L11 13.500L8 11.500L13.500 6.500" fill="none" stroke="#333" stroke-width="1"/><path d="M14.500 5.500l-1 3.500l-2.500 -2.500z" fill="#333"/></svg>
<svg class="abs" style="left:859.5px;top:255px" width="18" height="18" viewBox="0 0 20 20"><circle cx="10" cy="10" r="7.500" fill="url(#lg)" stroke="#333" stroke-width="1.200"/><path d="M5 5L15 15" stroke="#333" stroke-width="1"/><path d="M4.500 4.500l3.500 1l-2.500 2.500zM15.500 15.500l-3.500 -1l2.500 -2.500z" fill="#333"/></svg>
<svg class="abs" style="left:859.5px;top:275px" width="18" height="18" viewBox="0 0 20 20"><path d="M2.500 16.500H18M2.500 16.500L12 3.500" fill="none" stroke="#333" stroke-width="1.300"/><path d="M10 5.900A13 13 0 0 1 15.400 14.700" fill="none" stroke="#333" stroke-width=".9"/><path d="M9.500 5.500l3.500 .5l-2 2.500z" fill="#333"/><path d="M2.500 17.800H18" stroke="#888" stroke-width=".8"/></svg>
<div class="abs" style="left:860.5px;top:296.5px;width:17px;height:1px;background:#b9b7a5"></div>
<svg class="abs" style="left:859.5px;top:300px" width="18" height="18" viewBox="0 0 20 20"><path d="M3 2V18M17 2V18M3 6H17" stroke="#333" stroke-width="1.1" fill="none"/><path d="M3 6l3 -1.500v3zM17 6l-3 -1.500v3z" fill="#333"/><path d="M11.500 7.500L7 13H10L8 18L13.500 11.500H10.500Z" fill="#f79a1a"/></svg>
<svg class="abs" style="left:859.5px;top:320px" width="18" height="18" viewBox="0 0 20 20"><path d="M3 2V18M17 2V18M3 6H17" stroke="#333" stroke-width="1.1" fill="none"/><path d="M3 6l3 -1.500v3zM17 6l-3 -1.500v3z" fill="#333"/><path d="M3 13H11M11 10.500V16" stroke="#333" stroke-width="1.100"/><path d="M11 13l-3 -1.500v3z" fill="#333"/></svg>
<svg class="abs" style="left:859.5px;top:340px" width="18" height="18" viewBox="0 0 20 20"><path d="M3 3V17M10 3V17M17 3V17M3 8H17" stroke="#333" stroke-width="1.100"/><path d="M3 8l2.500 -1.500v3zM10 8l-2.500 -1.500v3zM10 8l2.500 -1.500v3zM17 8l-2.500 -1.500v3z" fill="#333"/></svg>
<svg class="abs" style="left:859.5px;top:361px" width="18" height="18" viewBox="0 0 20 20"><path d="M2 4.500H18M2 15.500H18M4 3V6M16 3V6M4 14V17M16 14V17" stroke="#333" stroke-width="1.100"/><path d="M2 4.500l3 -1.500v3zM18 4.500l-3 -1.500v3zM2 15.500l3 -1.500v3zM18 15.500l-3 -1.500v3z" fill="#333"/><rect x="8.500" y="6" width="4.500" height="8" fill="#f5b400" stroke="#8a5a00" stroke-width=".8"/><path d="M6.500 6V14" stroke="#333" stroke-width="1" stroke-dasharray="1.500 1"/></svg>
<svg class="abs" style="left:859.5px;top:379.5px" width="18" height="18" viewBox="0 0 20 20"><path d="M8 3V16M4 16H12M5 18H11" stroke="#333" stroke-width="1.200"/><path d="M2 9H6M10 9H17M17 6V12" stroke="#888" stroke-width="1.100"/><path d="M17 9l-3 -1.500v3z" fill="#888"/></svg>
<div class="abs" style="left:860.5px;top:402.0px;width:17px;height:1px;background:#b9b7a5"></div>
<svg class="abs" style="left:859.5px;top:406.5px" width="18" height="18" viewBox="0 0 20 20"><rect x="2.500" y="5" width="15.500" height="10" fill="#fff" stroke="#333" stroke-width="1.200"/><path d="M11 5V15" stroke="#333" stroke-width="1"/><circle cx="6.700" cy="10" r="2.300" fill="#111"/><path d="M6.700 6V14M3.500 10H10" stroke="#111" stroke-width="1"/><text x="12" y="13.500" font-size="8" font-weight="bold" fill="#111" font-family="Liberation Sans,sans-serif">.1</text></svg>
<svg class="abs" style="left:859.5px;top:427.5px" width="18" height="18" viewBox="0 0 20 20"><circle cx="10" cy="10" r="7.500" fill="url(#lg)" stroke="#333" stroke-width="1.200"/><path d="M10 7.500V12.500M7.500 10H12.500" stroke="#111" stroke-width="1.200"/></svg>
<svg class="abs" style="left:859.5px;top:447.5px" width="18" height="18" viewBox="0 0 20 20"><path d="M3 2V18M17 2V18M3 6H17" stroke="#333" stroke-width="1.1" fill="none"/><path d="M3 6l3 -1.500v3zM17 6l-3 -1.500v3z" fill="#333"/><path d="M5.500 12.500L8.500 15.500L14.500 9.500" fill="none" stroke="#2a9a1a" stroke-width="2.400"/></svg>
<svg class="abs" style="left:859.5px;top:467.5px" width="18" height="18" viewBox="0 0 20 20"><path d="M4 11H6.500L9 5L12.500 16L14.500 11H17.500" fill="none" stroke="#333" stroke-width="1.300"/><path d="M2 11l3.500 -2v4z" fill="#333"/></svg>
<div class="abs" style="left:860.5px;top:488.0px;width:17px;height:1px;background:#b9b7a5"></div>
<svg class="abs" style="left:859.5px;top:491px" width="18" height="18" viewBox="0 0 20 20"><path d="M3 9V18M17 9V18M3 14.5H17" stroke="#333" stroke-width="1.1" fill="none"/><path d="M3 14.5l3 -1.500v3zM17 14.5l-3 -1.500v3z" fill="#333"/><path d="M6 11L13 4L15.500 6.500L8.500 13.500L5.500 14Z" fill="#f0b030" stroke="#7a4a10" stroke-width=".7"/><path d="M13 4L15.500 6.500" stroke="#c03030" stroke-width="1.500"/></svg>
<svg class="abs" style="left:859.5px;top:511px" width="18" height="18" viewBox="0 0 20 20"><path d="M3 9V18M17 9V18M3 14.5H17" stroke="#333" stroke-width="1.1" fill="none"/><path d="M3 14.5l3 -1.500v3zM17 14.5l-3 -1.500v3z" fill="#333"/><text x="10" y="11.500" font-size="11.500" fill="#333" font-family="Liberation Sans,sans-serif" text-anchor="middle">A</text></svg>
<svg class="abs" style="left:859.5px;top:532.5px" width="18" height="18" viewBox="0 0 20 20"><path d="M3 2V18M17 2V18M3 6H17" stroke="#333" stroke-width="1.1" fill="none"/><path d="M3 6l3 -1.500v3zM17 6l-3 -1.500v3z" fill="#333"/><path d="M7 13.500A3 3 0 0 1 12.500 11.500M13 14A3 3 0 0 1 7.500 16" fill="none" stroke="#2a8a1a" stroke-width="1.300"/><path d="M13.500 10l-.3 3l-2.500 -1.500zM6.500 17.500l.3 -3l2.500 1.500z" fill="#2a8a1a"/></svg>
<div class="abs" style="left:860.5px;top:553.5px;width:17px;height:1px;background:#b9b7a5"></div>
<svg class="abs" style="left:859.5px;top:557.5px" width="18" height="18" viewBox="0 0 20 20"><path d="M3 10V18M17 10V18M3 15.5H17" stroke="#333" stroke-width="1.1" fill="none"/><path d="M3 15.5l3 -1.500v3zM17 15.5l-3 -1.500v3z" fill="#333"/><path d="M5 11.500Q8 7 12.500 8.500L11 11.500Q8 13.500 5 11.500Z" fill="#8a4a1a"/><path d="M11.500 9L17 3.500L18 5L12.500 10.500Z" fill="#c87830" stroke="#6a3a10" stroke-width=".5"/></svg>
<svg class="abs" style="left:884.7px;top:129px" width="18" height="18" viewBox="0 0 20 20"><path d="M3 17.500H18" stroke="#333" stroke-width="1"/><path d="M6.500 12L15 3L18 6L9.500 15Z" fill="#f2c070" stroke="#8a5a20" stroke-width=".7"/><path d="M6.500 12L9.500 15L7 17H4.500L3.500 15Z" fill="#d84010" stroke="#7a2000" stroke-width=".6"/></svg>
<svg class="abs" style="left:884.7px;top:149px" width="18" height="18" viewBox="0 0 20 20"><circle cx="5.500" cy="6" r="3.300" fill="#f4f4f4" stroke="#333" stroke-width="1"/><path d="M10 4.500Q15 3.500 15.500 8" fill="none" stroke="#333" stroke-width="1.200"/><path d="M15.500 10l-2.200 -3h4.400z" fill="#333"/><circle cx="11" cy="13" r="3.500" fill="#9ccbee" stroke="#1f6fc4" stroke-width="1.100"/><circle cx="14.500" cy="14.500" r="3.500" fill="#9ccbee" stroke="#1f6fc4" stroke-width="1.100"/></svg>
<svg class="abs" style="left:884.7px;top:169px" width="18" height="18" viewBox="0 0 20 20"><path d="M10 2V18.500" stroke="#333" stroke-width="1"/><path d="M8 5V16H3.500Z" fill="#f0f0f0" stroke="#333" stroke-width="1.100"/><path d="M12 5V16H16.500Z" fill="#9ccbee" stroke="#1f6fc4" stroke-width="1.100"/></svg>
<svg class="abs" style="left:884.7px;top:189px" width="18" height="18" viewBox="0 0 20 20"><path d="M3 16.500V12Q3 9.500 6 9.500Q5.500 4 10.500 4Q15 4 15 9H18" fill="none" stroke="#333" stroke-width="1.400"/><path d="M3.500 16.500H18M6 12.500H18" stroke="#1f6fc4" stroke-width="1.300"/><path d="M6 12.500Q8 12 8.500 9.500Q8.500 7 10.500 7Q12.500 7 12.500 9.500" fill="none" stroke="#1f6fc4" stroke-width="1.100"/></svg>
<svg class="abs" style="left:884.7px;top:209px" width="18" height="18" viewBox="0 0 20 20"><rect x="3" y="3" width="5.5" height="5.5" fill="#f4f4f4" stroke="#333" stroke-width="1.1"/><rect x="11.5" y="3" width="5.5" height="5.5" fill="#9ccbee" stroke="#1f6fc4" stroke-width="1.1"/><rect x="3" y="11.5" width="5.5" height="5.5" fill="#9ccbee" stroke="#1f6fc4" stroke-width="1.1"/><rect x="11.5" y="11.5" width="5.5" height="5.5" fill="#9ccbee" stroke="#1f6fc4" stroke-width="1.1"/></svg>
<svg class="abs" style="left:884.7px;top:229px" width="18" height="18" viewBox="0 0 20 20"><path d="M10 2.500V17.500M2.500 10H17.500" stroke="#333" stroke-width="1.300"/><path d="M10 1l2.500 3.500h-5zM10 19l2.500 -3.500h-5zM1 10l3.500 -2.500v5zM19 10l-3.500 -2.500v5z" fill="#111"/><rect x="8.300" y="8.300" width="3.400" height="3.400" fill="#eee" stroke="#333" stroke-width=".9"/></svg>
<svg class="abs" style="left:884.7px;top:249px" width="18" height="18" viewBox="0 0 20 20"><path d="M12.500 4A6.800 6.800 0 1 1 6 5" fill="none" stroke="#333" stroke-width="1.500"/><path d="M13.500 4.500l-4.500 2.500v-5.500z" fill="#333"/></svg>
<svg class="abs" style="left:884.7px;top:269px" width="18" height="18" viewBox="0 0 20 20"><rect x="3" y="3" width="14.500" height="14.500" fill="url(#bg)" stroke="#1f6fc4" stroke-width="1.300"/><rect x="3" y="10" width="8" height="7.5" fill="#f4f4f4" stroke="#333" stroke-width="1.1"/></svg>
<svg class="abs" style="left:884.7px;top:289px" width="18" height="18" viewBox="0 0 20 20"><path d="M4 3H12L17 17H4Z" fill="#f4f4f4" stroke="#333" stroke-width="1.100"/><path d="M12 3L17 17H12Z" fill="#9ccbee" stroke="#1f6fc4" stroke-width="1"/><path d="M6 13.500H13" stroke="#111" stroke-width="1.400"/><path d="M14.500 13.500l-3.500 -2.200v4.400z" fill="#111"/></svg>
<svg class="abs" style="left:884.7px;top:309px" width="18" height="18" viewBox="0 0 20 20"><path d="M14.500 2.500L7.500 17.500" stroke="#1f6fc4" stroke-width="1.500"/><path d="M2 11H7" stroke="#333" stroke-width="1.300"/><path d="M11.500 11H18" stroke="#1f6fc4" stroke-width="1.200" stroke-dasharray="1.500 1.200"/></svg>
<svg class="abs" style="left:884.7px;top:329px" width="18" height="18" viewBox="0 0 20 20"><path d="M16.500 2.500L12 17" stroke="#1f6fc4" stroke-width="1.500"/><path d="M2 11.500H7" stroke="#333" stroke-width="1.300"/><path d="M8 11.500H13" stroke="#1f6fc4" stroke-width="1.200" stroke-dasharray="1.500 1.200"/></svg>
<svg class="abs" style="left:884.7px;top:349px" width="18" height="18" viewBox="0 0 20 20"><path d="M17 5H6Q3.500 5 3.500 7.500V13Q3.500 15.500 6 15.500H17.500" fill="url(#lg)" stroke="#333" stroke-width="1.300"/><circle cx="15" cy="5" r="1.800" fill="#1f6fc4"/></svg>
<svg class="abs" style="left:884.7px;top:369px" width="18" height="18" viewBox="0 0 20 20"><path d="M5.500 6Q3.500 6 3.500 8.500V13.500Q3.500 16 6 16H14.500Q17 16 17 13.500V8.500Q17 6 15 6" fill="url(#lg)" stroke="#333" stroke-width="1.300"/><circle cx="6.500" cy="5.500" r="1.800" fill="#1f6fc4"/><circle cx="14" cy="5.500" r="1.800" fill="#1f6fc4"/></svg>
<svg class="abs" style="left:884.7px;top:389px" width="18" height="18" viewBox="0 0 20 20"><path d="M2.500 10H17.500" stroke="#1f6fc4" stroke-width="1.200"/><path d="M6 7L10 10L6 13ZM14 7L10 10L14 13Z" fill="#1f6fc4"/></svg>
<svg class="abs" style="left:884.7px;top:409px" width="18" height="18" viewBox="0 0 20 20"><path d="M4 17H17V4H11L4 11Z" fill="url(#lg)" stroke="#333" stroke-width="1.200"/><path d="M3 12L12 3" stroke="#1f6fc4" stroke-width="1.500"/></svg>
<svg class="abs" style="left:884.7px;top:429.5px" width="18" height="18" viewBox="0 0 20 20"><path d="M4 17H17V4H12Q4 4 4 12Z" fill="url(#lg)" stroke="#333" stroke-width="1.200"/><path d="M3.500 13Q3.500 3.500 13 3.500" fill="none" stroke="#1f6fc4" stroke-width="1.500"/></svg>
<svg class="abs" style="left:884.7px;top:451px" width="18" height="18" viewBox="0 0 20 20"><path d="M3 8L7 5H15L11 8ZM3 8H11V16H3ZM11 8L15 5V13L11 16Z" fill="#9ccbee" stroke="#1f6fc4" stroke-width="1.100"/><path d="M13 7L17.500 4V12L13 15M1.500 9.500V17.500" fill="none" stroke="#1f6fc4" stroke-width="1"/></svg>
<svg class="abs" style="left:884.7px;top:481px" width="18" height="18" viewBox="0 0 20 20"><rect x="3" y="2.5" width="9.5" height="7" fill="#f4f4f4" stroke="#333" stroke-width="1.1"/><rect x="6" y="6" width="9.5" height="7" fill="#9aa2aa" stroke="#333" stroke-width="1.1"/><rect x="9" y="10.5" width="9.5" height="7" fill="#f4f4f4" stroke="#333" stroke-width="1.1"/></svg>
<svg class="abs" style="left:884.7px;top:501px" width="18" height="18" viewBox="0 0 20 20"><rect x="9" y="10.5" width="9.5" height="7" fill="#f4f4f4" stroke="#333" stroke-width="1.1"/><rect x="6" y="6.5" width="9.5" height="7" fill="#f4f4f4" stroke="#333" stroke-width="1.1"/><rect x="3" y="2.5" width="9.5" height="7" fill="#dfe3e8" stroke="#333" stroke-width="1.1"/></svg>
<svg class="abs" style="left:884.7px;top:521px" width="18" height="18" viewBox="0 0 20 20"><rect x="3" y="3" width="10" height="8" fill="#f4f4f4" stroke="#333" stroke-width="1.1"/><rect x="7.5" y="8" width="10" height="8.5" fill="#9aa2aa" stroke="#333" stroke-width="1.1"/></svg>
<svg class="abs" style="left:884.7px;top:539.5px" width="18" height="18" viewBox="0 0 20 20"><rect x="7.5" y="8" width="10" height="8.5" fill="#9aa2aa" stroke="#333" stroke-width="1.1"/><rect x="3" y="3" width="10" height="8" fill="#f4f4f4" stroke="#333" stroke-width="1.1"/></svg>

<!--DRAW-->
<div class="abs" style="left:30px;top:120px;width:824px;height:460px;background:#a3a294"></div>
<div id="draw" class="abs"></div>
<svg class="abs" style="left:32px;top:122px" width="806" height="443" viewBox="32 122 806 443" font-family="Liberation Sans, Noto Sans CJK SC, sans-serif">
  <rect x="32" y="122" width="806" height="443" fill="#f9f9f9"/>
  <!-- magenta -->
  <g stroke="#ff28ff" stroke-width="1.1" fill="none">
    <path d="M552.5 122V321M554.6 122V321M558.6 122V321M579.5 122V321"/>
    <path d="M552.5 551V565M554.6 551V565M558.6 551V565M579.5 551V565"/>
  </g>
  <!-- red -->
  <g stroke="#f23a3a" fill="none">
    <path d="M565.8 122V551" stroke-width="1.6" stroke="#f45a5a"/>
    <path d="M642.5 122V565M781.2 122V565" stroke-width="1.2"/>
    <path d="M430 321.3H836.5M477 551.3H836.5" stroke-width="1.3"/>
    <path d="M135.8 552V565M412 552V565" stroke-width="1.3" stroke="#f02020"/>
  </g>
  <!-- green -->
  <path d="M297 207.7H679.5" stroke="#3cf53c" stroke-width="1.4"/>
  <text x="52" y="225.500" font-family="Liberation Serif, Noto Serif CJK SC, serif" font-weight="200" font-size="37" fill="#18ee18" letter-spacing="1.1">仿木纹砖铺地</text>
  <!-- polar tracking dotted -->
  <path d="M32 292.600H256" stroke="#333" stroke-width="1.100" stroke-dasharray="1.100 2.200"/>
  <path d="M256 292.600H558" stroke="#2a2a2a" stroke-width="1.100" stroke-dasharray="2 .9"/>
  <path d="M553 292.800H566" stroke="#4aa0e0" stroke-width="1"/>
  <path d="M558.6 289V297" stroke="#ff9a20" stroke-width="1.2"/>
  <!-- crosshair -->
  <path d="M278.500 271V317M254.500 293.400H301.500" stroke="#111" stroke-width="1.200"/>
  <rect x="276.5" y="291.2" width="4" height="4" fill="none" stroke="#555" stroke-width="0.8"/>
  <!-- column dots -->
  <circle cx="565.8" cy="321" r="11" fill="#050005" stroke="#e020e0" stroke-width="1.2"/>
  <circle cx="565.8" cy="551" r="11" fill="#050005" stroke="#e020e0" stroke-width="1.2"/>
  <path d="M555 321.3H577M565.8 310V332M555 551.3H577M565.8 540V562" stroke="#c01010" stroke-width="1.2"/>
  <!-- tooltip -->
  <rect x="293.5" y="309.5" width="136" height="14.5" fill="#c6c8e2" stroke="#20205c" stroke-width="1"/>
  <text x="295" y="321" font-family="Liberation Mono, Noto Sans Mono CJK SC, monospace" font-size="10.6" fill="#15154a" xml:space="preserve" textLength="118" lengthAdjust="spacingAndGlyphs">极轴: 3734.4436 &lt; 180°</text>
  <!-- watermark -->
  <text x="388" y="368.5" font-weight="bold" font-size="18.5" fill="#e3e3e3" textLength="128" lengthAdjust="spacingAndGlyphs">cad2688.com</text>
  <!-- axis bubbles -->
  <g fill="none" stroke="#111" stroke-width="1.1">
    <circle cx="135.8" cy="534.3" r="17.6"/>
    <circle cx="412" cy="534.3" r="17.6"/>
  </g>
  <g font-family="Liberation Serif, serif" font-size="34" fill="#0a0a0a" text-anchor="middle">
    <text x="136.6" y="546">6</text>
    <text x="412.4" y="546">7</text>
  </g>
  <!-- UCS icon -->
  <g stroke="#222" stroke-width="1.1" fill="none">
    <path d="M45 507V546M49 550.3H87"/>
    <path d="M45 496.5L40.8 507H49.2Z" fill="#ddd"/>
    <path d="M97.5 550.3L87 545.8V554.8Z" fill="#ddd"/>
    <path d="M45 499V507M88 550.3H95" stroke-width="0.8" stroke="#555"/>
    <rect x="40.6" y="546" width="8.4" height="8"/>
  </g>
  <g font-size="13.5" fill="#3a3a3a" text-anchor="middle">
    <text x="47.3" y="489">Y</text>
    <text x="111" y="556">X</text>
  </g>
</svg>

<!--TABS-->
<div class="abs" style="left:32px;top:565px;width:535px;height:14px;background:#e9e7d8"></div>
<div class="abs" style="left:565px;top:565px;width:273px;height:14px;background:#f3f2ec"></div>
<div class="abs" style="left:565px;top:566px;width:3px;height:12px;background:#d9d7c8;border-left:1px solid #fff;border-right:1px solid #9a988a"></div>
<div class="abs" style="left:836.500px;top:122px;width:15.500px;height:443px;background:linear-gradient(90deg,#ecebe0 0,#f4f3ec 40%,#fdfdfb 100%)"></div>
<div class="abs" style="left:836.500px;top:564.500px;width:15.500px;height:15.500px;background:#ecebdc"></div>
<div class="abs" style="left:852px;top:122px;width:2px;height:458px;background:#f8f8f8"></div>
<div class="abs" style="left:32px;top:578px;width:822px;height:2px;background:#f8f8f8"></div>
<svg class="abs" style="left:32px;top:565px" width="200" height="14" viewBox="32 565 200 14">
  <g fill="#eceadb" stroke="#c9c7b6" stroke-width="0.8"><rect x="33.5" y="566.5" width="12" height="11"/><rect x="45.5" y="566.5" width="12.5" height="11"/><rect x="58" y="566.5" width="12.5" height="11"/><rect x="70.5" y="566.5" width="12.5" height="11"/></g>
  <g fill="#aaa89a"><path d="M37 568h1.4v8H37zM43.5 568v8l-4.5-4z"/><path d="M54.5 568v8l-4.5-4z"/><path d="M62 568v8l4.500-4z"/><path d="M74 568v8l4.500-4zM79 568h1.400v8H79z"/></g>
  <path d="M83 565H125.500L120.500 579H88Z" fill="#fbfbfb"/>
  <path d="M83.500 565L88.500 578.500M125.500 565.500L120.500 578.500M125.800 565.500L120.800 578.500M164.500 565.500L159.500 578.500M208 565.500L203 578.500" stroke="#333" stroke-width="0.9" fill="none"/>
  <path d="M120.500 578.300H203" stroke="#555" stroke-width="0.8"/>
</svg>
<div class="abs" style="left:93px;top:565px;font-size:10.5px;line-height:13px;color:#111;font-weight:500;white-space:pre">模型</div>
<div class="abs" style="left:130px;top:565px;font-size:10.5px;line-height:13px;color:#111;white-space:pre">布局1</div>
<div class="abs" style="left:172px;top:565px;font-size:10.5px;line-height:13px;color:#111;white-space:pre">布局2</div>
<div class="abs sb" style="left:568.5px;top:565.5px;width:15px;height:12.5px"><svg class="abs" style="left:-1px;top:-1px" width="15" height="12.5"><path d="M9.1 3.25L6.1 6.25L9.1 9.25" fill="none" stroke="#3a5288" stroke-width="2"/></svg></div><div class="abs sb" style="left:729.5px;top:565.5px;width:15px;height:12.5px"><svg class="abs" style="left:-1px;top:-1px" width="15" height="12.5"><path d="M4.5 3.75V8.75M6.5 3.75V8.75M8.5 3.75V8.75M10.5 3.75V8.75" stroke="#eef2fe" stroke-width="1"/></svg></div><div class="abs sb" style="left:822px;top:565.5px;width:13px;height:12.5px"><svg class="abs" style="left:-1px;top:-1px" width="13" height="12.5"><path d="M4.9 3.25L7.9 6.25L4.9 9.25" fill="none" stroke="#3a5288" stroke-width="2"/></svg></div><div class="abs sb" style="left:838px;top:122.5px;width:12.5px;height:13px"><svg class="abs" style="left:-1px;top:-1px" width="12.5" height="13"><path d="M3.05 8.0L6.25 4.8L9.45 8.0" fill="none" stroke="#3a5288" stroke-width="2"/></svg></div><div class="abs sb" style="left:838px;top:181.5px;width:12.5px;height:13.5px"><svg class="abs" style="left:-1px;top:-1px" width="12.5" height="13.5"><path d="M3.75 3.75H8.75M3.75 5.75H8.75M3.75 7.75H8.75M3.75 9.75H8.75" stroke="#eef2fe" stroke-width="1"/></svg></div><div class="abs sb" style="left:838px;top:549.5px;width:12.5px;height:13px"><svg class="abs" style="left:-1px;top:-1px" width="12.5" height="13"><path d="M3.05 5.0L6.25 8.2L9.45 5.0" fill="none" stroke="#3a5288" stroke-width="2"/></svg></div>

<!--COMMAND-->
<div class="abs" style="left:0;top:580px;width:904px;height:4px;background:linear-gradient(#5c5c5c,#474747)"></div>
<div class="abs" style="left:0;top:584px;width:5px;height:55px;background:#3a3a3a"></div>
<div class="abs" style="left:4px;top:584px;width:14px;height:54px;background:#b9b9b9;border-left:1px solid #e4e4e4"></div>
<svg class="abs" style="left:6px;top:586px" width="11" height="5"><path d="M0 .5H10M0 2.500H10M0 4.500H10" stroke="#444" stroke-dasharray="1 1"/></svg>
<div class="abs" style="left:17px;top:584px;width:887px;height:54px;background:#f9f9f9"></div>
<div class="abs" style="left:17px;top:621px;width:887px;height:1px;background:#b0ae9e"></div>
<div class="abs" style="left:17px;top:622px;width:887px;height:1px;background:#fff"></div>
<div class="abs" style="left:894px;top:584px;width:10px;height:38px;background:#f1f0e8"></div>
<div class="abs" style="left:893px;top:623px;width:11px;height:15px;background:#e9e7d8"></div>
<div class="abs cmd" style="left:20px;top:584.500px"><b>命令</b>:</div>
<div class="abs cmd" style="left:20px;top:598.500px"><b>命令</b>: _line <b>指定第一点</b>:</div>
<div class="abs cmd" style="left:20px;top:624px"><b>指定下一点或</b> [<b>放弃</b>(U)]:</div>
<div class="abs sb" style="left:894.5px;top:586px;width:13px;height:12px"><svg class="abs" style="left:-1px;top:-1px" width="13" height="12"><path d="M3.3 7.5L6.5 4.3L9.7 7.5" fill="none" stroke="#3a5288" stroke-width="2"/></svg></div><div class="abs sb" style="left:894.5px;top:607px;width:13px;height:12.5px"><svg class="abs" style="left:-1px;top:-1px" width="13" height="12.5"><path d="M3.3 4.75L6.5 7.95L9.7 4.75" fill="none" stroke="#3a5288" stroke-width="2"/></svg></div><div class="abs sb" style="left:833px;top:623.5px;width:15px;height:13px"><svg class="abs" style="left:-1px;top:-1px" width="15" height="13"><path d="M9.1 3.5L6.1 6.5L9.1 9.5" fill="none" stroke="#3a5288" stroke-width="2"/></svg></div><div class="abs sb" style="left:848.5px;top:623.5px;width:14.5px;height:13px"><svg class="abs" style="left:-1px;top:-1px" width="14.5" height="13"><path d="M4.25 4.0V9.0M6.25 4.0V9.0M8.25 4.0V9.0M10.25 4.0V9.0" stroke="#eef2fe" stroke-width="1"/></svg></div><div class="abs sb" style="left:877px;top:623.5px;width:15px;height:13px"><svg class="abs" style="left:-1px;top:-1px" width="15" height="13"><path d="M5.9 3.5L8.9 6.5L5.9 9.5" fill="none" stroke="#3a5288" stroke-width="2"/></svg></div>
<div class="abs" style="left:0;top:638px;width:904px;height:2px;background:linear-gradient(90deg,#555 0,#666 40%,#8a8f92 50%,#777 62%,#555 100%)"></div>

<!--PLAYER-->
<div class="abs" style="left:0;top:640px;width:904px;height:22px;background:#000"></div>
<div class="abs" style="left:0;top:662px;width:904px;height:19.500px;background:#2f2f2f"></div>
<div class="abs" style="left:0;top:670px;width:822px;height:4px;background:#161616"></div>
<div class="abs" style="left:0;top:670px;width:788px;height:4px;background:#1878d2"></div>
<svg class="abs" style="left:834px;top:667px" width="12" height="10"><path d="M1 1L5.500 5L1 9ZM6 1L10.500 5L6 9Z" fill="#fff"/></svg>
<div class="abs" style="left:851px;top:662px;width:1px;height:21px;background:#0c0c0c"></div>
<div class="abs" style="left:852px;top:662px;width:1px;height:21px;background:#3c3c3c"></div>
<div class="abs" style="left:859px;top:665px;font-size:11.5px;line-height:14px;color:#a2a2a2;white-space:pre">00:44:29,</div>
<div class="abs" style="left:0;top:681.500px;width:904px;height:42px;background:linear-gradient(#c9c9cb 0,#cdcdcf 9%,#f5f6f8 11%,#eef0f4 35%,#e4e6eb 70%,#dadde4 100%)"></div>
<div class="abs" style="left:0;top:693px;width:2px;height:24.500px;background:#b4b5b9"></div>
<svg class="abs" style="left:10px;top:692px" width="44" height="26" viewBox="10 692 44 26">
  <path d="M12.800 707.200Q31.700 685.500 50.400 707.200L44.800 711Q31.700 691.500 18.600 711Z" fill="#4a536b"/>
  <circle cx="31.700" cy="705" r="8.100" fill="#4a536b"/><circle cx="31.700" cy="704.400" r="3.300" fill="none" stroke="#dfe2e9" stroke-width="1.300"/>
</svg>
<div class="abs" style="left:530px;top:682px;width:105px;height:41px;background:linear-gradient(#1767c6 0,#0b5bb8 30%,#07509f 100%)"></div>
<svg class="abs" style="left:570px;top:690px" width="30" height="30" viewBox="0 0 30 30"><defs><linearGradient id="pg" x1="0" y1="0" x2="0" y2="1"><stop offset="0" stop-color="#fff"/><stop offset="0.55" stop-color="#f2f2f2"/><stop offset="1" stop-color="#b9bec8"/></linearGradient></defs><path d="M6 2.500L25.500 15L6 27.500Z" fill="url(#pg)"/></svg>
<svg class="abs" style="left:480px;top:696px" width="330" height="20" viewBox="480 696 330 20" fill="#4e566e">
  <rect x="483" y="700" width="11" height="11" fill="#59627a" stroke="#3f4760" stroke-width="0.8"/>
  <path d="M506 700.500h2v10h-2zM516.500 700.500v10L508.500 705.500z"/>
  <path d="M657.500 700.500h2v10h-2zM649 700.500v10L657 705.500z"/>
  <path d="M671 707L677.200 700.500L683.500 707zM671 708.500h12.500v2.200H671z"/>
  <path d="M697 703h4l5-4v13l-5-4h-4z"/><path d="M708.500 702.500v6" stroke="#4e566e" stroke-width="1.400"/><path d="M711 704v3" stroke="#4e566e" stroke-width="1"/>
  <rect x="718" y="702" width="49.500" height="5.500" fill="#858a94"/>
  <rect x="718" y="702" width="34" height="5.500" fill="#1b7bd6"/>
  <rect x="788.500" y="702" width="8.500" height="6.500" fill="#59627a"/>
  <path d="M786.500 703.500v-3h3.500M795.500 700.500h3.500v3M799 707v3h-3.500M790 710h-3.500v-3" fill="none" stroke="#3f4760" stroke-width="1.500"/>
</svg>


</div>
</body>
</html>
